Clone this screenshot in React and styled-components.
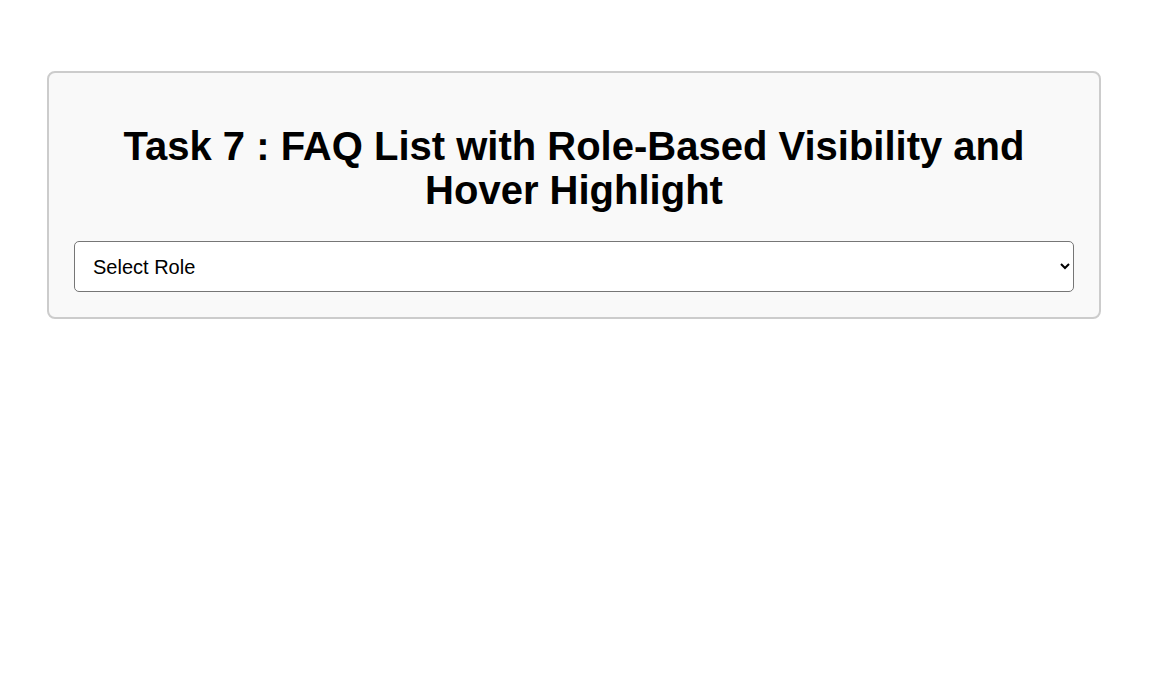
import React from 'react';
import styled, { createGlobalStyle } from 'styled-components';

const GlobalStyle = createGlobalStyle`
  body {
    margin: 0;
    background: #ffffff;
    font-family: "Liberation Sans", Arial, sans-serif;
  }
`;

const Page = styled.div`
  padding: 71px 0 0 47px;
`;

const Card = styled.div`
  box-sizing: border-box;
  width: 1054px;
  padding: 25px;
  background: #f9f9f9;
  border: 2px solid #cccccc;
  border-radius: 8px;
`;

const Title = styled.h1`
  margin: 26px 0 29px;
  font-size: 40px;
  line-height: 44px;
  font-weight: bold;
  text-align: center;
  color: #000000;
`;

const RoleSelect = styled.select`
  box-sizing: border-box;
  display: block;
  width: 100%;
  height: 51px;
  padding: 0 14px;
  font-family: "Liberation Sans", Arial, sans-serif;
  font-size: 20px;
  color: #000000;
  background: #ffffff;
  border: 1px solid #767676;
  border-radius: 5px;
`;

const App = () => {
  return (
    <>
      <GlobalStyle />
      <Page>
        <Card>
          <Title>Task 7 : FAQ List with Role-Based Visibility and Hover Highlight</Title>
          <RoleSelect defaultValue="">
            <option value="">Select Role</option>
            <option value="admin">Admin</option>
            <option value="user">User</option>
          </RoleSelect>
        </Card>
      </Page>
    </>
  );
};

export default App;
